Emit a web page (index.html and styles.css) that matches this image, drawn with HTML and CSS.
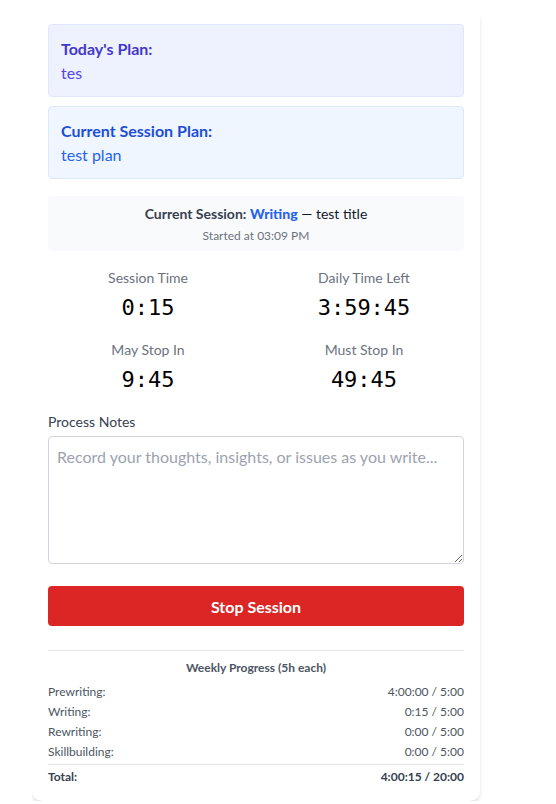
FILE: index.html
```html
<!DOCTYPE html>
<html lang="en">
<head>
<meta charset="utf-8">
<title>Writing Session</title>
<link rel="stylesheet" href="styles.css">
</head>
<body>
<main class="card">
  <section class="plan plan-day">
    <h3 class="plan-title">Today's Plan:</h3>
    <p class="plan-text">tes</p>
  </section>
  <section class="plan plan-session">
    <h3 class="plan-title">Current Session Plan:</h3>
    <p class="plan-text">test plan</p>
  </section>

  <section class="session-info">
    <p class="session-line"><span class="session-label">Current Session:</span> <span class="session-type">Writing</span> — test title</p>
    <p class="session-start">Started at 03:09 PM</p>
  </section>

  <section class="timers">
    <div class="timer">
      <div class="timer-label">Session Time</div>
      <div class="timer-value">0:15</div>
    </div>
    <div class="timer">
      <div class="timer-label">Daily Time Left</div>
      <div class="timer-value">3:59:45</div>
    </div>
    <div class="timer">
      <div class="timer-label">May Stop In</div>
      <div class="timer-value">9:45</div>
    </div>
    <div class="timer">
      <div class="timer-label">Must Stop In</div>
      <div class="timer-value">49:45</div>
    </div>
  </section>

  <label class="notes-label" for="notes">Process Notes</label>
  <textarea id="notes" class="notes" placeholder="Record your thoughts, insights, or issues as you write..."></textarea>

  <button class="stop-btn" type="button">Stop Session</button>

  <section class="weekly">
    <h4 class="weekly-title">Weekly Progress (5h each)</h4>
    <div class="weekly-rows">
      <div class="row"><span>Prewriting:</span><span>4:00:00 / 5:00</span></div>
      <div class="row"><span>Writing:</span><span>0:15 / 5:00</span></div>
      <div class="row"><span>Rewriting:</span><span>0:00 / 5:00</span></div>
      <div class="row"><span>Skillbuilding:</span><span>0:00 / 5:00</span></div>
      <div class="row total"><span>Total:</span><span>4:00:15 / 20:00</span></div>
    </div>
  </section>
</main>
</body>
</html>
```
FILE: styles.css
```css
* { box-sizing: border-box; }
html, body { background: #ffffff; }
body {
  margin: 8px 0 0 32px;
  font-family: "Lato", "Noto Sans", sans-serif;
  color: #111827;
}
p, h3, h4 { margin: 0; }

.card {
  width: 448px;
  padding: 16px;
  background: #fff;
  border-radius: 10px;
  box-shadow: 0 4px 6px -1px rgba(0,0,0,0.1), 0 2px 4px -2px rgba(0,0,0,0.1);
  display: flex;
  flex-direction: column;
}

.plan {
  padding: 12px 12px 11px;
  border-radius: 4px;
  border: 1px solid;
}
.plan + .plan { margin-top: 9px; }
.plan-title { font-size: 16px; line-height: 24px; font-weight: 700; }
.plan-text { font-size: 16px; line-height: 24px; }
.plan-day { background: #eef2ff; border-color: #e0e7ff; }
.plan-day .plan-title { color: #4338ca; }
.plan-day .plan-text { color: #4f46e5; }
.plan-session { background: #eff6ff; border-color: #dbeafe; }
.plan-session .plan-title { color: #1d4ed8; }
.plan-session .plan-text { color: #2563eb; }

.session-info {
  margin-top: 17px;
  background: #f9fafb;
  border-radius: 4px;
  padding: 8px 8px 7px;
  text-align: center;
}
.session-line { font-size: 14px; line-height: 20px; color: #111827; }
.session-label { color: #374151; font-weight: 700; }
.session-type { color: #2563eb; font-weight: 900; }
.session-start { margin-top: 4px; font-size: 12px; line-height: 16px; color: #6b7280; }

.timers {
  margin-top: 17px;
  display: grid;
  grid-template-columns: 1fr 1fr;
  gap: 16px;
  text-align: center;
}
.timer-label { font-size: 14px; line-height: 20px; color: #6b7280; }
.timer-value {
  margin-top: 4px;
  font-family: "DejaVu Sans Mono", "Liberation Mono", monospace;
  font-size: 22px;
  line-height: 32px;
  color: #000;
}

.notes-label {
  display: block;
  margin-top: 16px;
  font-size: 14px;
  line-height: 20px;
  color: #374151;
}
.notes {
  display: block;
  margin-top: 4px;
  width: 100%;
  height: 128px;
  padding: 8px;
  border: 1px solid #d1d5db;
  border-radius: 4px;
  font-family: inherit;
  font-size: 16px;
  line-height: 24px;
  resize: vertical;
}
.notes::placeholder { color: #9ca3af; }

.stop-btn {
  margin-top: 22px;
  height: 40px;
  border: 0;
  border-radius: 4px;
  background: #dc2626;
  color: #fff;
  font-family: inherit;
  font-size: 16px;
  font-weight: 700;
}

.weekly {
  margin-top: 24px;
  border-top: 1px solid #e5e7eb;
  padding-top: 9px;
}
.weekly-title {
  text-align: center;
  font-size: 12px;
  line-height: 16px;
  font-weight: 700;
  color: #4b5563;
  margin-bottom: 8px;
}
.weekly-rows { display: flex; flex-direction: column; gap: 4px; }
.row {
  display: flex;
  justify-content: space-between;
  font-size: 12px;
  line-height: 16px;
  color: #4b5563;
}
.row.total {
  border-top: 1px solid #e5e7eb;
  padding-top: 4px;
  font-weight: 700;
  color: #374151;
}
```
